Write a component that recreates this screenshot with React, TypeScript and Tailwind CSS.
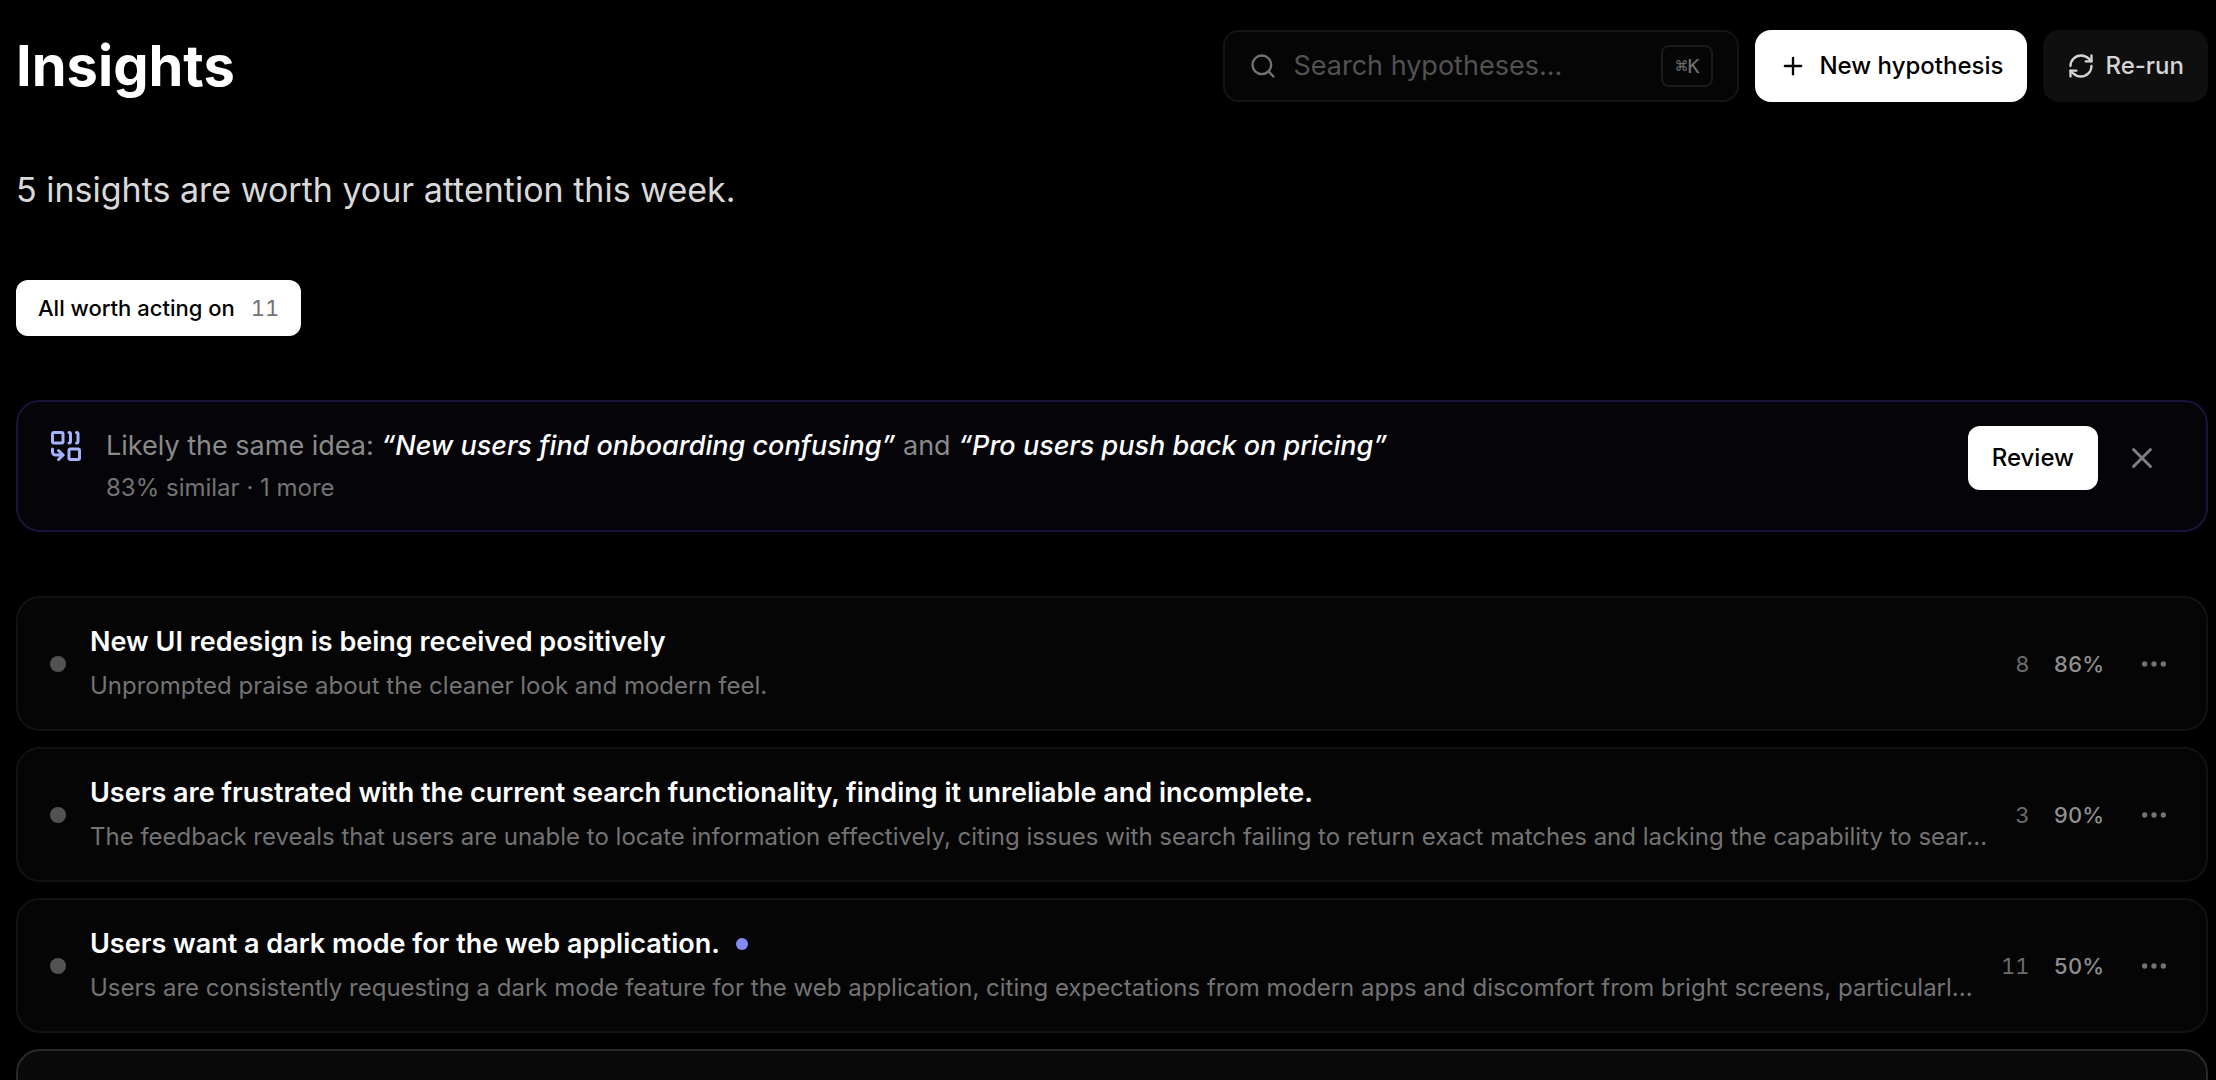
import { useState } from "react";
import { Combine, Ellipsis, Plus, RefreshCw, Search, X } from "lucide-react";

type Insight = {
  title: string;
  description: string;
  mentions: number;
  confidence: number;
  isNew?: boolean;
};

const INSIGHTS: Insight[] = [
  {
    title: "New UI redesign is being received positively",
    description: "Unprompted praise about the cleaner look and modern feel.",
    mentions: 8,
    confidence: 86,
  },
  {
    title: "Users are frustrated with the current search functionality, finding it unreliable and incomplete.",
    description:
      "The feedback reveals that users are unable to locate information effectively, citing issues with search failing to return exact matches and lacking the capability to sear...",
    mentions: 3,
    confidence: 90,
  },
  {
    title: "Users want a dark mode for the web application.",
    description:
      "Users are consistently requesting a dark mode feature for the web application, citing expectations from modern apps and discomfort from bright screens, particularl...",
    mentions: 11,
    confidence: 50,
    isNew: true,
  },
];

function InsightRow({ insight }: { insight: Insight }) {
  return (
    <li className="flex min-h-[135px] items-center rounded-3xl border-2 border-[#121212] bg-[#050505] pl-8 pr-6">
      <span className="size-4 shrink-0 rounded-full bg-[#525252]" />

      <div className="ml-6 min-w-0 flex-1">
        <div className="flex items-center gap-4">
          <h2 className="truncate text-[27px] leading-10 font-semibold text-white">{insight.title}</h2>
          {insight.isNew && <span className="size-3 shrink-0 rounded-full bg-[#818cf8]" />}
        </div>
        <p className="mt-1 truncate text-[24px] leading-10 text-[#737373]">{insight.description}</p>
      </div>

      <div className="ml-4 flex shrink-0 items-center gap-6 text-[22px] leading-8 tabular-nums">
        <span className="text-[#6b6b6b]">{insight.mentions}</span>
        <span className="font-medium text-[#8f8f8f]">{insight.confidence}%</span>
      </div>

      <button
        type="button"
        aria-label="More actions"
        className="ml-[22px] flex size-14 shrink-0 items-center justify-center rounded-xl text-[#737373]"
      >
        <Ellipsis size={32} />
      </button>
    </li>
  );
}

export default function App() {
  const [query, setQuery] = useState("");
  const [showMerge, setShowMerge] = useState(true);

  return (
    <main className="h-screen overflow-hidden bg-black pt-[30px] pr-2 pl-4 font-[Inter,'Noto_Sans',sans-serif] text-white">
      {/* Header */}
      <header className="flex items-center justify-between gap-4">
        <h1 className="text-[56px] leading-[72px] font-bold">Insights</h1>

        <div className="flex items-center gap-4">
          <label className="flex h-[72px] w-[516px] items-center rounded-2xl border-2 border-[#141414] bg-[#050505] px-6">
            <Search size={28} strokeWidth={2} className="shrink-0 text-[#737373]" />
            <input
              type="text"
              aria-label="Search hypotheses"
              placeholder="Search hypotheses..."
              value={query}
              onChange={(e) => setQuery(e.target.value)}
              className="ml-4 min-w-0 flex-1 bg-transparent text-[27px] leading-10 text-white outline-none placeholder:text-[#525252]"
            />
            <kbd className="flex h-[42px] w-[52px] shrink-0 items-center justify-center rounded-lg border-2 border-[#1a1a1a] font-['DejaVu_Sans_Mono',monospace] text-[20px] text-[#737373]">
              ⌘K
            </kbd>
          </label>

          <button
            type="button"
            className="flex h-[72px] items-center gap-3 rounded-2xl bg-white px-6 text-[24px] font-medium text-black"
          >
            <Plus size={28} strokeWidth={2} />
            New hypothesis
          </button>

          <button
            type="button"
            className="flex h-[72px] items-center gap-2.5 rounded-2xl bg-[#0f0f0f] px-6 text-[24px] font-medium text-[#d4d4d4]"
          >
            <RefreshCw size={28} strokeWidth={2} />
            Re-run
          </button>
        </div>
      </header>

      <p className="mt-16 text-[34px] leading-12 text-[#d9d9d9]">5 insights are worth your attention this week.</p>

      {/* Filters */}
      <nav className="mt-[66px] flex gap-3">
        <button
          type="button"
          aria-pressed="true"
          className="flex h-14 items-center gap-4 rounded-xl bg-white px-[22px] text-[22px] font-medium text-black"
        >
          All worth acting on
          <span className="font-normal text-[#737373] tabular-nums">11</span>
        </button>
      </nav>

      {/* Merge suggestion */}
      {showMerge && (
        <section className="mt-16 flex items-start rounded-3xl border-2 border-[#17153b] bg-[#050509] py-6 pr-9 pl-[30px]">
          <Combine size={36} strokeWidth={2} className="mt-0.5 shrink-0 text-[#a5b4fc]" />
          <div className="ml-[22px] min-w-0 flex-1">
            <p className="text-[27px] leading-10 text-[#8a8a8a]">
              Likely the same idea:{" "}
              <em className="font-medium text-white">“New users find onboarding confusing”</em> and{" "}
              <em className="font-medium text-white">“Pro users push back on pricing”</em>
            </p>
            <p className="mt-1 text-[24px] leading-9 text-[#737373]">83% similar · 1 more</p>
          </div>
          <button
            type="button"
            className="h-16 shrink-0 rounded-xl bg-white px-6 text-[24px] font-medium text-black"
          >
            Review
          </button>
          <button
            type="button"
            aria-label="Dismiss"
            onClick={() => setShowMerge(false)}
            className="ml-4 flex h-16 w-14 shrink-0 items-center justify-center text-[#808080]"
          >
            <X size={34} strokeWidth={2} />
          </button>
        </section>
      )}

      <ul className="mt-16 flex flex-col gap-4">
        {INSIGHTS.map((insight) => (
          <InsightRow key={insight.title} insight={insight} />
        ))}
        <li className="min-h-[135px] rounded-3xl border-2 border-[#292929] bg-[#0a0a0a]" />
      </ul>
    </main>
  );
}
